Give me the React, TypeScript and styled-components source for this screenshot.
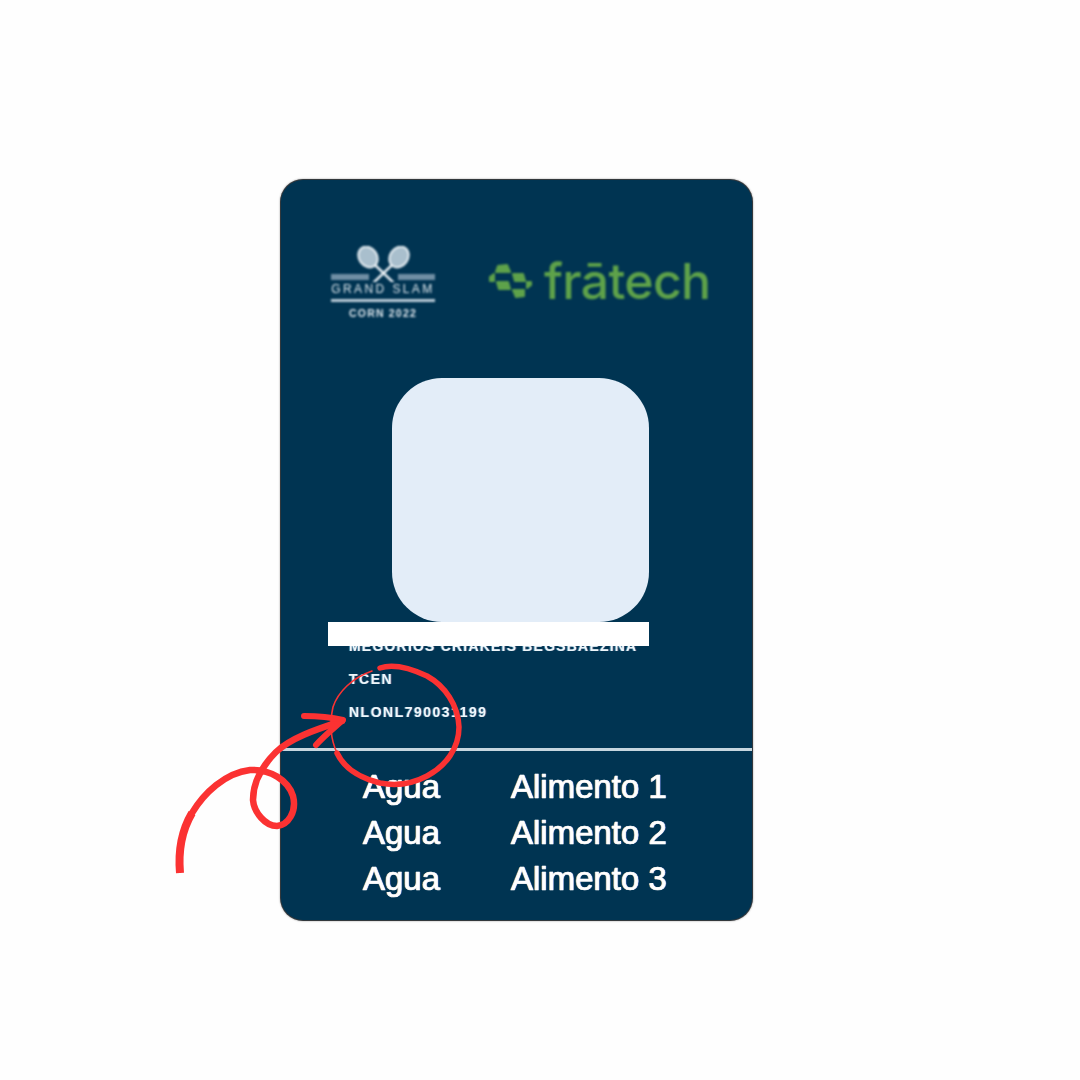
import React from "react";
import styled, { createGlobalStyle } from "styled-components";

const Global = createGlobalStyle`
  html, body { margin: 0; padding: 0; background: #fefefe; }
`;

const Page = styled.main`
  position: relative;
  width: 1080px;
  height: 1080px;
  box-sizing: border-box;
  padding: 180px 0 0 281px;
  background: #fefefe;
  overflow: hidden;
  font-family: "Liberation Sans", Arial, sans-serif;
`;

const Card = styled.section`
  width: 471px;
  height: 740px;
  box-sizing: border-box;
  display: flex;
  flex-direction: column;
  background: #003452;
  border-radius: 22px;
  box-shadow: 0 0 0 1px #33383c, 0 0 2px 1px #9a9a9a;
  overflow: hidden;
`;

const Header = styled.header`
  display: flex;
  align-items: flex-start;
  height: 198px;
  box-sizing: border-box;
  padding: 66px 0 0 50px;
  filter: blur(0.9px);
`;

const SlamLogo = styled.div`
  width: 104px;
  display: flex;
  flex-direction: column;
  align-items: center;
  color: #dfe8ee;
`;

const SlamName = styled.div`
  width: 104px;
  height: 17px;
  border-bottom: 3px solid #b9cbd7;
  font-size: 12px;
  line-height: 15px;
  font-weight: 400;
  letter-spacing: 2.4px;
  text-align: center;
  white-space: nowrap;
`;

const SlamYear = styled.div`
  margin-top: 6px;
  font-size: 10.5px;
  line-height: 10px;
  font-weight: 700;
  letter-spacing: 1.2px;
  white-space: nowrap;
`;

const Fratech = styled.div`
  display: flex;
  align-items: center;
  gap: 11px;
  margin: 13px 0 0 53px;
  color: #5ea24a;
`;

const FratechName = styled.span`
  font-family: Inter, "Open Sans", sans-serif;
  font-size: 50px;
  line-height: 44px;
  font-weight: 500;
  letter-spacing: -0.7px;
`;

const Photo = styled.div`
  width: 257px;
  height: 244px;
  margin-left: 111px;
  background: #e3edf8;
  border-radius: 50px;
  flex: none;
`;

const Redaction = styled.div`
  position: relative;
  z-index: 1;
  width: 321px;
  height: 24px;
  margin-left: 47px;
  background: #ffffff;
  flex: none;
`;

const Details = styled.div`
  display: flex;
  flex-direction: column;
  gap: 19px;
  height: 109px;
  box-sizing: border-box;
  margin-top: -7px;
  padding-left: 68px;
  flex: none;
`;

const DetailLine = styled.div<{ $spacing: number }>`
  height: 14px;
  font-size: 14px;
  line-height: 14px;
  font-weight: 700;
  letter-spacing: ${(p) => p.$spacing}px;
  color: #eef6fa;
  white-space: nowrap;
  filter: blur(0.7px);
  text-shadow: -1px 0 0 rgba(120, 210, 240, 0.5), 1px 0 0 rgba(200, 130, 160, 0.35);
`;

const Divider = styled.hr`
  width: 100%;
  height: 3px;
  margin: 0;
  border: 0;
  background: #c6d6df;
  flex: none;
`;

const Foods = styled.div`
  display: grid;
  grid-template-columns: 148px auto;
  grid-auto-rows: 46px;
  justify-content: start;
  padding: 13px 0 0 82px;
`;

const Food = styled.div`
  font-size: 33px;
  line-height: 46px;
  color: #ffffff;
  white-space: nowrap;
  filter: blur(0.6px);
  -webkit-text-stroke: 0.7px #ffffff;
  text-shadow: -1px 0 0 rgba(255, 215, 130, 0.55), 1px 0 0 rgba(120, 140, 255, 0.5);
`;

const Annotation = styled.svg`
  position: absolute;
  inset: 0;
  z-index: 2;
  width: 1080px;
  height: 1080px;
  pointer-events: none;
`;

const foods = [
  ["Agua", "Alimento 1"],
  ["Agua", "Alimento 2"],
  ["Agua", "Alimento 3"],
];

const Rackets = () => (
  <svg width="104" height="36" viewBox="0 0 104 36" aria-hidden="true">
    <path d="M0 31h38M67 31h37" stroke="#6f8ea4" strokeWidth="6" />
    <g fill="none" stroke="#e6eef3" strokeLinecap="round">
      <path d="M44 19 L66 40 M61 19 L39 40" strokeWidth="2.5" />
      <g fill="#a9bfcd" strokeWidth="2">
        <ellipse cx="37" cy="11" rx="9" ry="11" transform="rotate(-35 37 11)" />
        <ellipse cx="68" cy="11" rx="9" ry="11" transform="rotate(35 68 11)" />
      </g>
    </g>
  </svg>
);

const FratechMark = () => (
  <svg width="45" height="36" viewBox="0 0 45 36" aria-hidden="true">
    <g fill="#5ea24a" stroke="#5ea24a" strokeWidth="2" strokeLinejoin="round">
      <path d="M10 3 L19 2 L22 9 H8 Z" />
      <path d="M2 14 L6 11 V18 H2 Z" />
      <path d="M9 19 H20 L22 26 H11 Z" />
      <path d="M25 11 H35 L37 18 H27 Z" />
      <path d="M39 19 H43 L43 22 L39 25 Z" />
      <path d="M25 27 H36 V33 L28 34 Z" />
    </g>
  </svg>
);

export default function App() {
  return (
    <Page>
      <Global />
      <Card>
        <Header>
          <SlamLogo>
            <Rackets />
            <SlamName>GRAND SLAM</SlamName>
            <SlamYear>CORN 2022</SlamYear>
          </SlamLogo>
          <Fratech>
            <FratechMark />
            <FratechName>frātech</FratechName>
          </Fratech>
        </Header>
        <Photo />
        <Redaction />
        <Details>
          <DetailLine $spacing={1.2}>MEGORIOS CRIAKEIS BEGSBAEZINA</DetailLine>
          <DetailLine $spacing={1.5}>TCEN</DetailLine>
          <DetailLine $spacing={1.5}>NLONL790031199</DetailLine>
        </Details>
        <Divider />
        <Foods>
          {foods.flat().map((label, i) => (
            <Food key={i}>{label}</Food>
          ))}
        </Foods>
      </Card>
      <Annotation viewBox="0 0 1080 1080" aria-hidden="true">
        <g fill="none" stroke="#fb3232" strokeLinecap="round" strokeLinejoin="round">
          <path
            d="M380 668 C392 664 410 668 427 676 C445 686 458 705 459 727 C459 748 446 766 427 776 C412 784 395 786 380 783 C360 778 344 768 337 753"
            strokeWidth="5.5"
          />
          <path d="M337 753 C331 740 329 725 333 707 C338 692 352 678 372 671" strokeWidth="1.6" />
          <path
            d="M180 873 C178 850 182 830 192 813"
            strokeWidth="8"
            strokeLinecap="butt"
          />
          <path
            d="M192 813 C204 793 225 773 250 770 C270 769 288 780 293 796 C297 812 288 825 277 826 C265 826 254 812 253 800 C253 783 262 766 276 752 C292 737 318 729 342 721"
            strokeWidth="6.5"
          />
          <path d="M304 716 C318 716 330 717 343 720 C334 728 325 735 316 745" strokeWidth="6" />
        </g>
      </Annotation>
    </Page>
  );
}
